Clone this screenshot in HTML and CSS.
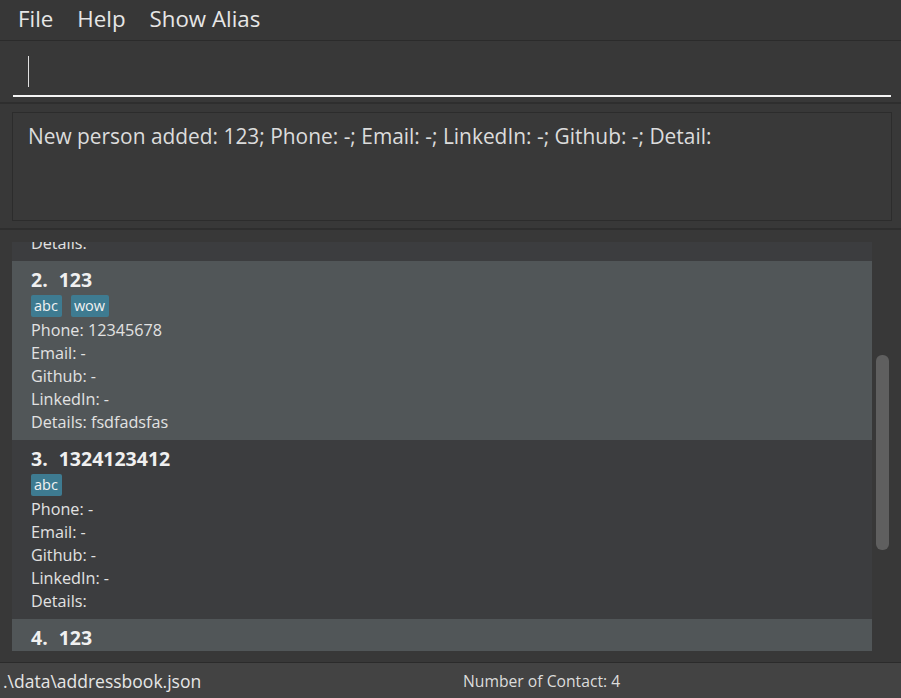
FILE: index.html
```html
<!DOCTYPE html>
<html>
<head>
<meta charset="utf-8">
<link rel="stylesheet" href="styles.css">
</head>
<body>
<div class="app">
  <nav class="menubar">
    <span class="menu-item">File</span>
    <span class="menu-item">Help</span>
    <span class="menu-item">Show Alias</span>
  </nav>
  <section class="command">
    <div class="command-input"><span class="caret"></span></div>
  </section>
  <section class="result">
    <div class="result-box">New person added: 123; Phone: -; Email: -; LinkedIn: -; Github: -; Detail:</div>
  </section>
  <section class="list-panel">
    <div class="list" id="list">
      <div class="card odd">
        <div class="title"><span class="idx">1.</span>Alex</div>
        <div class="tags"><span class="tag">friends</span></div>
        <div class="field">Phone: 87438807</div>
        <div class="field">Email: -</div>
        <div class="field">Github: -</div>
        <div class="field">LinkedIn: -</div>
        <div class="field">Details:</div>
      </div>
      <div class="card even">
        <div class="title"><span class="idx">2.</span>123</div>
        <div class="tags"><span class="tag">abc</span><span class="tag">wow</span></div>
        <div class="field">Phone: 12345678</div>
        <div class="field">Email: -</div>
        <div class="field">Github: -</div>
        <div class="field">LinkedIn: -</div>
        <div class="field">Details: fsdfadsfas</div>
      </div>
      <div class="card odd">
        <div class="title"><span class="idx">3.</span>1324123412</div>
        <div class="tags"><span class="tag">abc</span></div>
        <div class="field">Phone: -</div>
        <div class="field">Email: -</div>
        <div class="field">Github: -</div>
        <div class="field">LinkedIn: -</div>
        <div class="field">Details:</div>
      </div>
      <div class="card even">
        <div class="title"><span class="idx">4.</span>123</div>
        <div class="tags"><span class="tag">abc</span></div>
        <div class="field">Phone: -</div>
        <div class="field">Email: -</div>
        <div class="field">Github: -</div>
        <div class="field">LinkedIn: -</div>
        <div class="field">Details:</div>
      </div>
    </div>
    <div class="scroll-track"><div class="scroll-thumb"></div></div>
  </section>
  <footer class="status">
    <span class="status-path">.\data\addressbook.json</span>
    <span class="status-count">Number of Contact: 4</span>
  </footer>
</div>
<script src="app.js"></script>
</body>
</html>
```
FILE: styles.css
```css
html, body {
  margin: 0;
  padding: 0;
  background: #383838;
  font-family: "Open Sans", "Noto Sans", sans-serif;
  color: #e0e0e0;
}
.app {
  width: 901px;
  height: 698px;
  display: flex;
  flex-direction: column;
  overflow: hidden;
}
.menubar {
  height: 40px;
  display: flex;
  align-items: flex-start;
  gap: 24px;
  padding-left: 18px;
  background: #373737;
  border-bottom: 1px solid #2b2b2b;
  flex: none;
}
.menu-item {
  font-size: 22.3px;
  color: #e6e6e6;
  line-height: 37px;
}
.command {
  height: 61px;
  padding: 0 10px 0 13px;
  border-bottom: 2px solid #2e2e2e;
  display: flex;
  flex-direction: column;
  justify-content: flex-end;
  flex: none;
}
.command-input {
  height: 48px;
  border-bottom: 2px solid #f4f4f4;
  margin-bottom: 5px;
  display: flex;
  align-items: center;
  padding-left: 15px;
}
.caret {
  width: 1px;
  height: 31px;
  background: #e0e0e0;
  margin-top: 1px;
}
.result {
  padding: 8px 9px 7px 12px;
  border-bottom: 2px solid #2e2e2e;
  flex: none;
}
.result-box {
  height: 109px;
  border: 1px solid #2c2c2c;
  background: #393939;
  padding: 10px 15px;
  box-sizing: border-box;
  font-size: 20.9px;
  color: #dcdcdc;
  line-height: 26px;
  white-space: nowrap;
}
.list-panel {
  flex: 1;
  display: flex;
  padding: 12px 0 11px 12px;
  min-height: 0;
  border-bottom: 1px solid #2b2b2b;
}
.list {
  width: 860px;
  overflow-y: scroll;
  scrollbar-width: none;
  background: #3c3d3f;
}
.list::-webkit-scrollbar { display: none; }
.scroll-track {
  width: 29px;
  display: flex;
  justify-content: flex-start;
  padding-left: 4px;
  box-sizing: border-box;
}
.scroll-thumb {
  width: 13px;
  height: 195px;
  margin-top: 113px;
  background: #5f5f5f;
  border-radius: 6px;
}
.card {
  height: 179px;
  box-sizing: border-box;
  padding: 5px 0 0 19px;
}
.card.odd { background: #3c3d3f; }
.card.even { background: #515658; }
.title {
  font-size: 19.5px;
  font-weight: 700;
  line-height: 28px;
  color: #f0f0f0;
}
.idx {
  display: inline-block;
  margin-right: 11px;
}
.tags {
  display: flex;
  gap: 9px;
  margin-top: 1px;
  height: 22px;
}
.tag {
  background: #3e7b91;
  color: #f2f2f2;
  font-size: 14.5px;
  line-height: 22px;
  padding: 0 4px 0 3px;
  border-radius: 2px;
}
.field {
  font-size: 16.2px;
  line-height: 23px;
  color: #e2e2e2;
}
.tags + .field { margin-top: 2px; }
.status {
  height: 35px;
  flex: none;
  background: #434343;
  display: flex;
  align-items: center;
}
.status-path {
  font-size: 17.5px;
  color: #e6e6e6;
  padding-left: 3px;
  width: 460px;
}
.status-count {
  font-size: 15.7px;
  color: #dcdcdc;
}
```
FILE: app.js
```js
document.getElementById('list').scrollTop = 160;
```
